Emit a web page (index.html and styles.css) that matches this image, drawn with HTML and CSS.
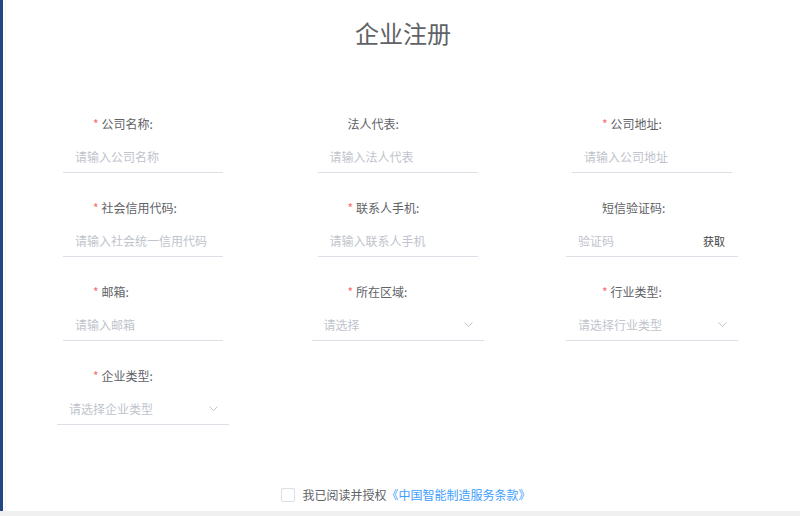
FILE: index.html
```html
<!DOCTYPE html>
<html lang="zh-CN">

<head>
    <meta charset="UTF-8">
    <meta name="viewport" content="width=device-width, initial-scale=1.0">
    <title>企业注册</title>
    <link rel="stylesheet" href="styles.css">
</head>

<body>
    <div class="page">
        <div class="inner">
            <h1 class="title">企业注册</h1>

            <form class="reg-form">
                <div class="field">
                    <label class="label required">公司名称:</label>
                    <input class="text-input" placeholder="请输入公司名称">
                </div>
                <div class="field">
                    <label class="label">法人代表:</label>
                    <input class="text-input" placeholder="请输入法人代表">
                </div>
                <div class="field">
                    <label class="label required">公司地址:</label>
                    <input class="text-input" placeholder="请输入公司地址">
                </div>

                <div class="field">
                    <label class="label required">社会信用代码:</label>
                    <input class="text-input" placeholder="请输入社会统一信用代码">
                </div>
                <div class="field">
                    <label class="label required">联系人手机:</label>
                    <input class="text-input" placeholder="请输入联系人手机">
                </div>
                <div class="field">
                    <label class="label">短信验证码:</label>
                    <div class="code-box">
                        <input class="code-input" placeholder="验证码">
                        <span class="code-btn">获取</span>
                    </div>
                </div>

                <div class="field">
                    <label class="label required">邮箱:</label>
                    <input class="text-input" placeholder="请输入邮箱">
                </div>
                <div class="field">
                    <label class="label required">所在区域:</label>
                    <div class="select">
                        <span>请选择</span>
                        <svg class="arrow" width="9" height="5" viewBox="0 0 9 5"><polyline points="0.5,0.5 4.5,4.5 8.5,0.5" fill="none" stroke="#c0c4cc" stroke-width="1"/></svg>
                    </div>
                </div>
                <div class="field">
                    <label class="label required">行业类型:</label>
                    <div class="select">
                        <span>请选择行业类型</span>
                        <svg class="arrow" width="9" height="5" viewBox="0 0 9 5"><polyline points="0.5,0.5 4.5,4.5 8.5,0.5" fill="none" stroke="#c0c4cc" stroke-width="1"/></svg>
                    </div>
                </div>

                <div class="field">
                    <label class="label required">企业类型:</label>
                    <div class="select">
                        <span>请选择企业类型</span>
                        <svg class="arrow" width="9" height="5" viewBox="0 0 9 5"><polyline points="0.5,0.5 4.5,4.5 8.5,0.5" fill="none" stroke="#c0c4cc" stroke-width="1"/></svg>
                    </div>
                </div>
            </form>

            <div class="agree">
                <span class="check"></span>
                <span>我已阅读并授权</span><a class="terms" href="#">《中国智能制造服务条款》</a>
            </div>
        </div>
    </div>
</body>

</html>
```

FILE: styles.css
```css
body {
    margin: 0;
    padding: 0;
    background: #f0f0f0;
    font-family: "Noto Sans CJK SC", "Noto Sans", sans-serif;
}

.page {
    height: 511px;
    background: #fff;
    border-left: 3px solid #234581;
}

.inner {
    height: 100%;
    margin-left: 2px;
    border-left: 1px dotted #e8e8e8;
}

.title {
    margin: 0;
    padding-top: 17px;
    font-size: 24px;
    font-weight: normal;
    line-height: 32px;
    color: #606266;
    text-align: center;
}

.reg-form {
    display: grid;
    grid-template-columns: repeat(3, 254.5px);
    row-gap: 25px;
    margin-top: 65px;
    padding-left: 57px;
}

.field {
    display: flex;
    flex-direction: column;
    align-items: flex-start;
}

.label {
    margin-left: 30px;
    margin-bottom: 7px;
    font-size: 12px;
    line-height: 20px;
    color: #606266;
}

.label.required::before {
    content: "*";
    color: #f56c6c;
    margin-right: 3px;
}

.text-input {
    width: 160px;
    height: 32px;
    box-sizing: border-box;
    padding: 0 12px;
    border: 0;
    border-bottom: 1px solid #dcdfe6;
    outline: none;
    font-family: inherit;
    font-size: 12px;
    color: #606266;
}

.text-input::placeholder,
.code-input::placeholder {
    color: #c0c4cc;
}

.code-box,
.select {
    width: 172px;
    height: 32px;
    box-sizing: border-box;
    margin-left: -6px;
    display: flex;
    align-items: center;
    justify-content: space-between;
    border-bottom: 1px solid #dcdfe6;
}

.code-input {
    width: 100px;
    padding: 0 12px;
    border: 0;
    outline: none;
    font-family: inherit;
    font-size: 12px;
}

.code-btn {
    margin-right: 13px;
    font-size: 11px;
    color: #444;
}

.select {
    padding: 0 11px 0 12px;
    font-size: 12px;
    color: #c0c4cc;
}

.agree {
    display: flex;
    align-items: center;
    justify-content: center;
    margin-top: 60px;
    padding-left: 6px;
    font-size: 12px;
    line-height: 20px;
    color: #606266;
}

.check {
    width: 12px;
    height: 12px;
    border: 1px solid #dcdfe6;
    border-radius: 2px;
    margin-right: 7px;
}

.terms {
    color: #409eff;
    text-decoration: none;
}
```
